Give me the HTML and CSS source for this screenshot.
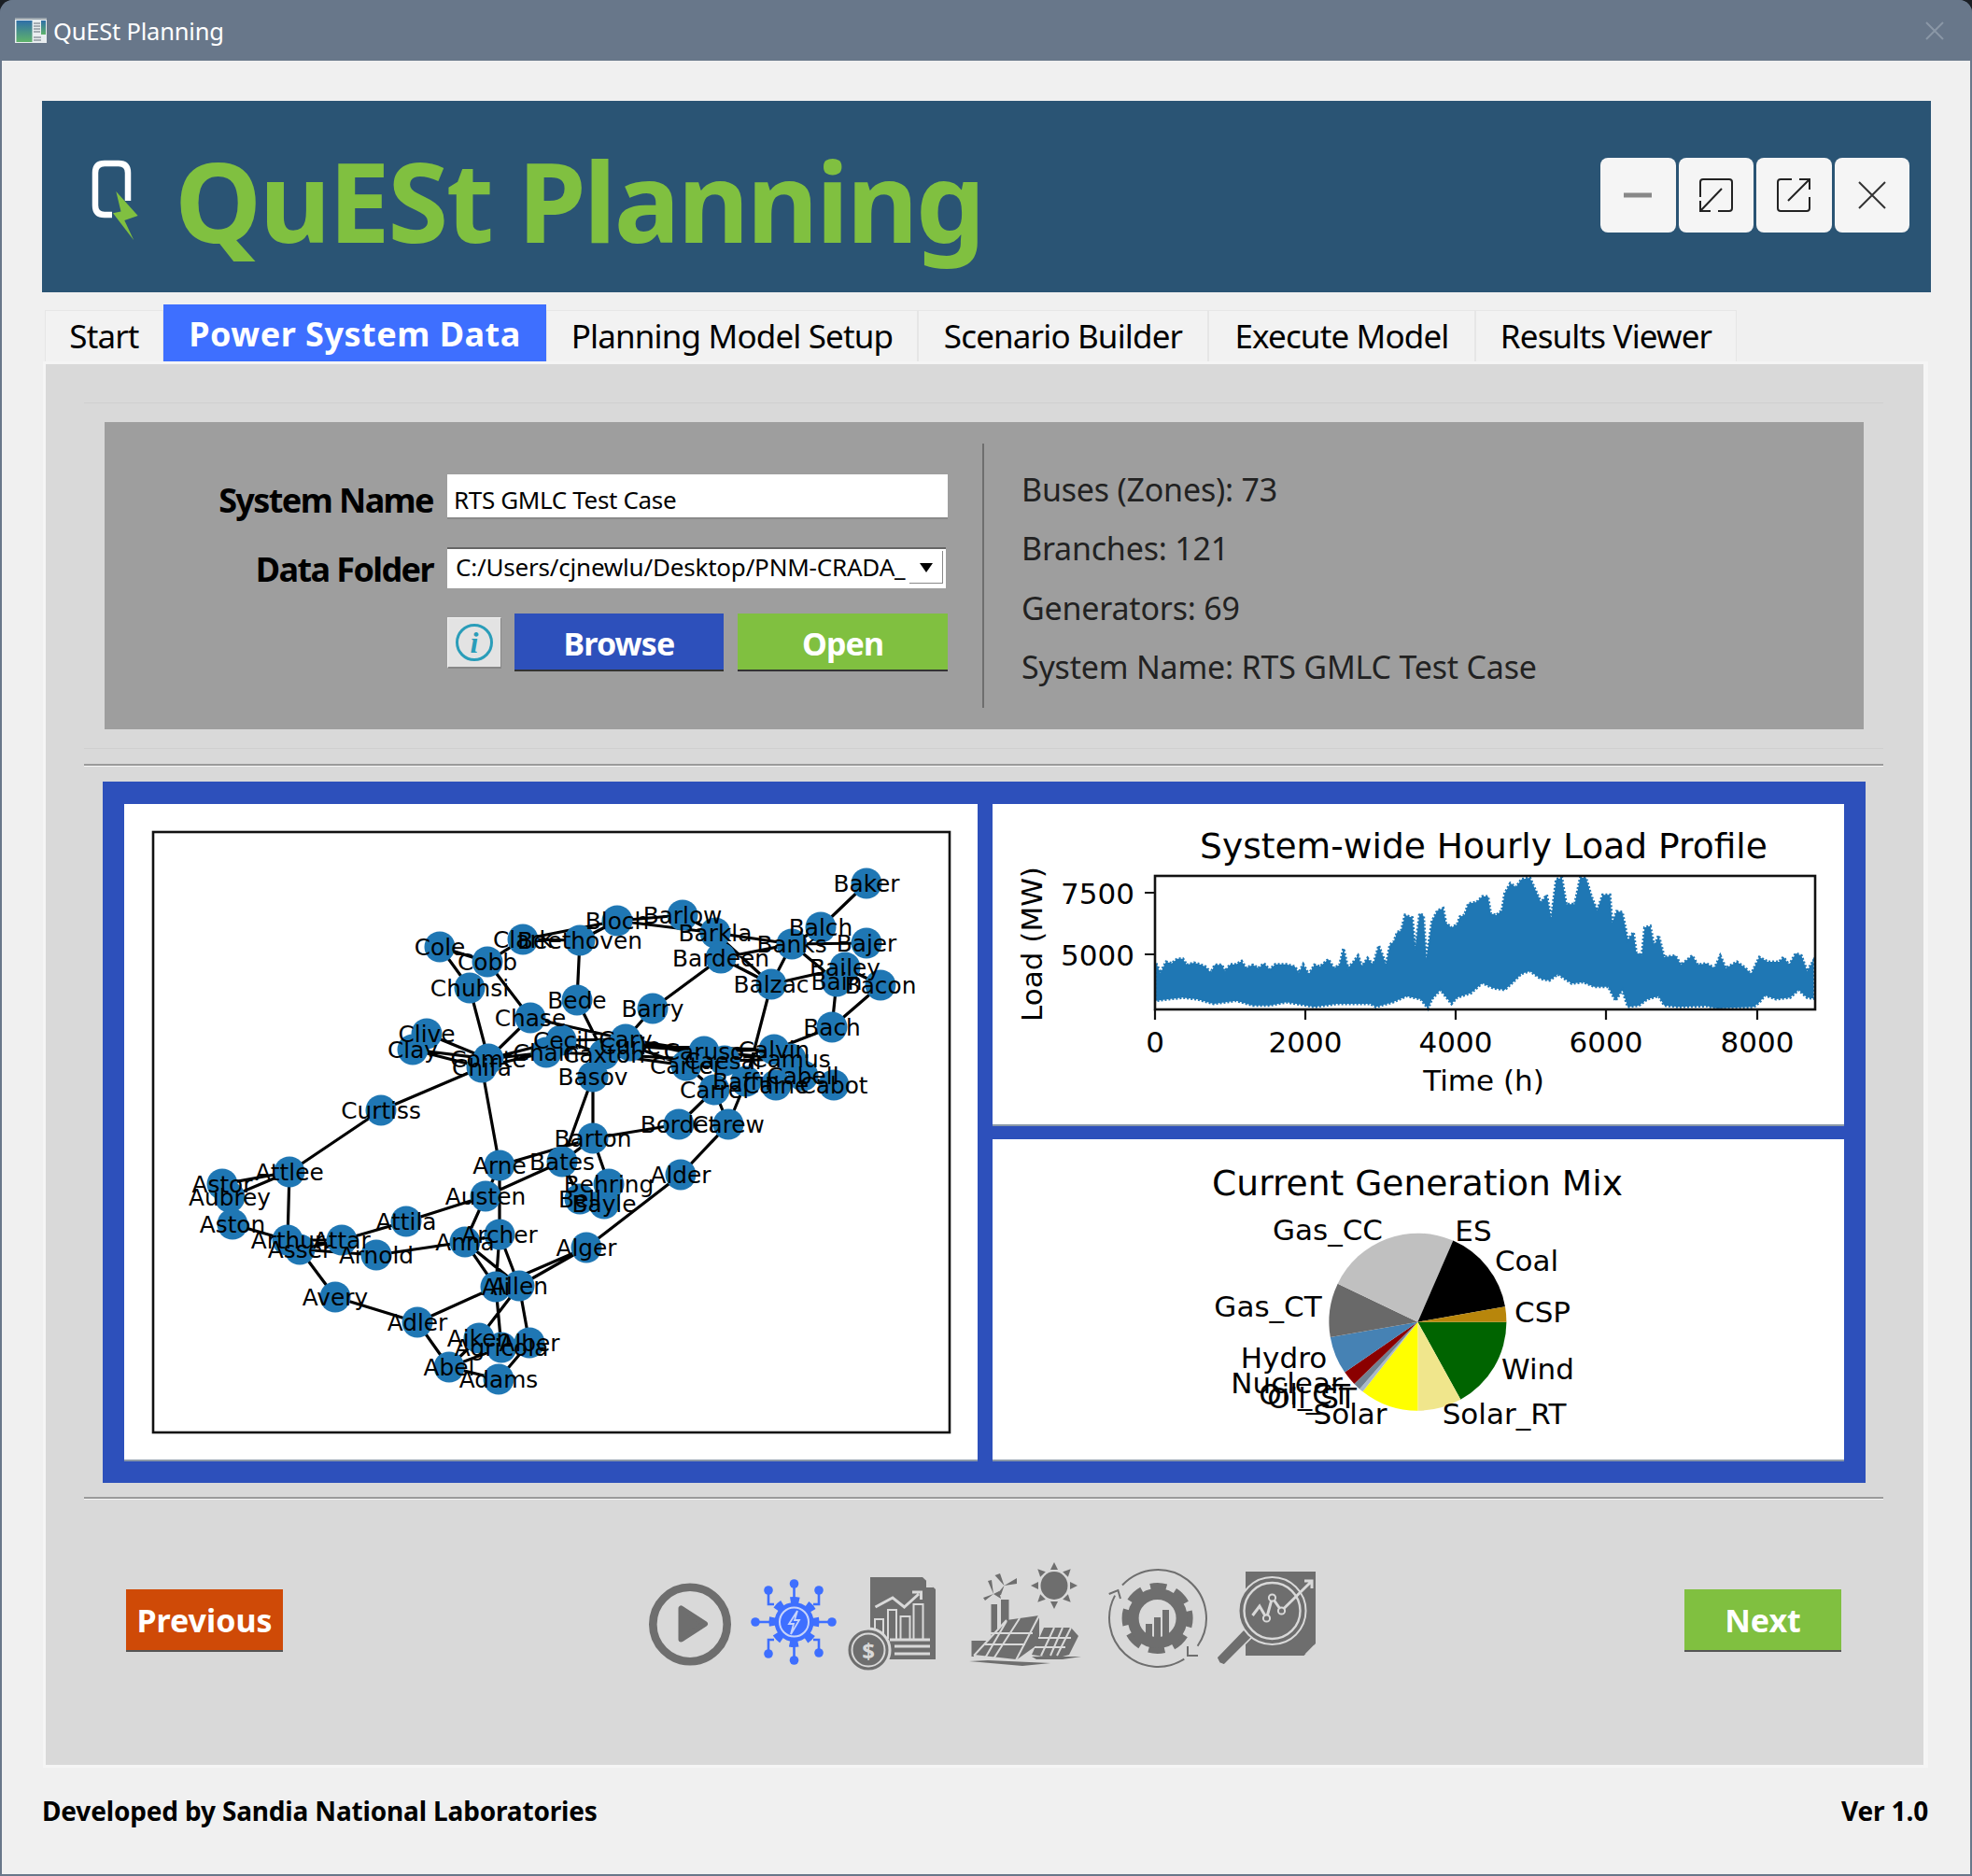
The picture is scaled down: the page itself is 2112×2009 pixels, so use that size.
FILE: index.html
```html
<!DOCTYPE html>
<html lang="en">
<head>
<meta charset="utf-8">
<title>QuESt Planning</title>
<link rel="stylesheet" href="styles.css">
</head>
<body>
<div class="window">
  <div class="titlebar">
    <svg class="app-icon" viewBox="0 0 34 27">
      <defs>
        <linearGradient id="appGrad" x1="0" y1="0" x2="0" y2="1">
          <stop offset="0" stop-color="#2f6fa8"/>
          <stop offset="1" stop-color="#5fb36a"/>
        </linearGradient>
      </defs>
      <rect width="34" height="27" fill="#e9eef0"/>
      <rect y="0" width="34" height="2" fill="#9aa5ad"/>
      <rect x="1.5" y="3" width="17" height="23" fill="url(#appGrad)"/>
      <rect x="28" y="3" width="5" height="15" fill="url(#appGrad)"/>
      <path d="M20 6h7M20 9h7M20 12h7M20 15h7M20 21h8M20 24h8" stroke="#8f989e" stroke-width="1.4"/>
    </svg>
    <span class="title-text">QuESt Planning</span>
    <svg class="title-close" viewBox="0 0 22 22"><path d="M2 2L20 20M20 2L2 20"/></svg>
  </div>

  <div class="content">
    <header class="banner">
      <svg class="logo" viewBox="95 168 54 92">
        <path class="logo-q" d="M137 215V185Q137 175 127 175H112Q102 175 102 185V220Q102 230 112 230H120"/>
        <path class="logo-bolt" d="M124.3 205L147.7 231L133.3 236L143.3 257.3L121 228.3L129.5 226.5Z"/>
      </svg>
      <h1 class="app-name">QuESt Planning</h1>
      <div class="win-buttons">
        <button class="win-btn"><svg viewBox="0 0 36 36"><path class="ic-min" d="M3 18H33"/></svg></button>
        <button class="win-btn"><svg viewBox="0 0 36 36"><path class="ic-win" d="M1 20V4Q1 1 4 1H32Q35 1 35 4V32Q35 35 32 35H20M12 35H1V24M1 35L24 11"/></svg></button>
        <button class="win-btn"><svg viewBox="0 0 36 36"><path class="ic-win" d="M16 1H4Q1 1 1 4V32Q1 35 4 35H32Q35 35 35 32V20M24 1H35V12M35 1L12 24"/></svg></button>
        <button class="win-btn"><svg viewBox="0 0 36 36"><path class="ic-close" d="M4 4L32 32M32 4L4 32"/></svg></button>
      </div>
    </header>

    <nav class="tabs">
      <span class="tab">Start</span>
      <span class="tab tab-active">Power System Data</span>
      <span class="tab">Planning Model Setup</span>
      <span class="tab">Scenario Builder</span>
      <span class="tab">Execute Model</span>
      <span class="tab">Results Viewer</span>
    </nav>

    <main class="panel">
      <section class="form-band">
        <div class="data-box">
          <div class="form">
            <div class="form-row row-name">
              <label class="field-label">System Name</label>
              <div class="text-input">RTS GMLC Test Case</div>
            </div>
            <div class="form-row row-folder">
              <label class="field-label">Data Folder</label>
              <div class="combo">
                <span class="combo-text">C:/Users/cjnewlu/Desktop/PNM-CRADA_</span>
                <span class="combo-arrow"><span class="combo-tri"></span></span>
              </div>
            </div>
            <div class="form-row row-actions">
              <span class="info-btn"><span class="info-ring">i</span></span>
              <button class="action browse">Browse</button>
              <button class="action open">Open</button>
            </div>
          </div>
          <div class="vline"></div>
          <ul class="stats">
            <li>Buses (Zones): 73</li>
            <li>Branches: 121</li>
            <li>Generators: 69</li>
            <li>System Name: RTS GMLC Test Case</li>
          </ul>
        </div>
      </section>
      <hr class="rule">

      <section class="plots">
        <div class="plot plot-network">
          <svg class="chart" viewBox="133 861 914 702">
            <rect class="axes" x="164" y="891" width="853" height="643"/>
            <g transform="translate(0 -1)">
            <path class="edges" d="M928 947L879 994M879 994L848 1012M848 1012L928 1011M848 1012L766 1000M848 1012L772 1027M848 1012L826 1055M848 1012L896 1052M826 1055L905 1037M905 1037L943 1056M896 1052L891 1101M943 1056L891 1101M891 1101L829 1125M766 1000L731 981M731 981L661 987M661 987L766 1000M661 987L621 1008M661 987L560 1007M560 1007L522 1031M560 1007L621 1008M522 1031L471 1015M471 1015L503 1059M522 1031L568 1091M503 1059L523 1135M621 1008L618 1072M618 1072L647 1130M699 1081L772 1027M699 1081L670 1114M772 1027L826 1055M766 1000L826 1055M766 1000L772 1027M826 1055L799 1159M568 1091L670 1114M568 1091L523 1135M457 1108L523 1135M442 1125L523 1135M442 1125L516 1144M523 1135L601 1115M516 1144L585 1128M523 1135L585 1128M601 1115L670 1114M601 1115L647 1130M585 1128L647 1130M670 1114L754 1127M670 1114L776 1137M675 1121L754 1127M675 1121L735 1142M675 1121L829 1125M647 1130L735 1142M647 1130L776 1137M754 1127L829 1125M754 1127L847 1135M776 1137L799 1159M776 1137L847 1135M735 1142L765 1168M847 1135L860 1153M829 1125L860 1153M860 1153L893 1163M831 1163L860 1153M799 1159L831 1163M765 1168L727 1205M765 1168L780 1205M799 1159L780 1205M780 1205L729 1259M727 1205L635 1220M647 1130L635 1154M635 1154L635 1220M635 1154L602 1245M635 1220L535 1249M635 1220L602 1245M635 1220L652 1269M602 1245L520 1282M602 1245L621 1285M652 1269L647 1290M516 1144L408 1190M516 1144L535 1249M408 1190L310 1256M310 1256L238 1269M310 1256L246 1283M238 1269L246 1283M310 1256L308 1329M246 1283L249 1312M249 1312L308 1329M308 1329L321 1339M308 1329L366 1329M321 1339L366 1329M321 1339L403 1345M366 1329L435 1309M435 1309L520 1282M403 1345L498 1331M535 1249L520 1282M520 1282L498 1331M535 1249L535 1323M498 1331L535 1323M498 1331L531 1379M498 1331L556 1378M535 1323L531 1379M535 1323L556 1378M628 1337L531 1379M628 1337L556 1378M628 1337L729 1259M321 1339L359 1390M359 1390L447 1417M447 1417L531 1379M447 1417L481 1465M556 1378L513 1434M531 1379L537 1444M556 1378L567 1439M513 1434L481 1465M537 1444L481 1465M481 1465L534 1478M567 1439L534 1478"/>
            <g class="nodes">
              <circle cx="928" cy="947" r="16.5"/><circle cx="879" cy="994" r="16.5"/><circle cx="928" cy="1011" r="16.5"/><circle cx="848" cy="1012" r="16.5"/><circle cx="905" cy="1037" r="16.5"/><circle cx="943" cy="1056" r="16.5"/><circle cx="896" cy="1052" r="16.5"/><circle cx="891" cy="1101" r="16.5"/><circle cx="731" cy="981" r="16.5"/><circle cx="661" cy="987" r="16.5"/><circle cx="766" cy="1000" r="16.5"/><circle cx="772" cy="1027" r="16.5"/><circle cx="826" cy="1055" r="16.5"/><circle cx="621" cy="1008" r="16.5"/><circle cx="560" cy="1007" r="16.5"/><circle cx="471" cy="1015" r="16.5"/><circle cx="522" cy="1031" r="16.5"/><circle cx="503" cy="1059" r="16.5"/><circle cx="618" cy="1072" r="16.5"/><circle cx="699" cy="1081" r="16.5"/><circle cx="568" cy="1091" r="16.5"/><circle cx="457" cy="1108" r="16.5"/><circle cx="442" cy="1125" r="16.5"/><circle cx="523" cy="1135" r="16.5"/><circle cx="516" cy="1144" r="16.5"/><circle cx="585" cy="1128" r="16.5"/><circle cx="601" cy="1115" r="16.5"/><circle cx="670" cy="1114" r="16.5"/><circle cx="675" cy="1121" r="16.5"/><circle cx="647" cy="1130" r="16.5"/><circle cx="635" cy="1154" r="16.5"/><circle cx="754" cy="1127" r="16.5"/><circle cx="776" cy="1137" r="16.5"/><circle cx="735" cy="1142" r="16.5"/><circle cx="829" cy="1125" r="16.5"/><circle cx="847" cy="1135" r="16.5"/><circle cx="860" cy="1153" r="16.5"/><circle cx="893" cy="1163" r="16.5"/><circle cx="831" cy="1163" r="16.5"/><circle cx="799" cy="1159" r="16.5"/><circle cx="765" cy="1168" r="16.5"/><circle cx="727" cy="1205" r="16.5"/><circle cx="780" cy="1205" r="16.5"/><circle cx="408" cy="1190" r="16.5"/><circle cx="635" cy="1220" r="16.5"/><circle cx="535" cy="1249" r="16.5"/><circle cx="602" cy="1245" r="16.5"/><circle cx="729" cy="1259" r="16.5"/><circle cx="310" cy="1256" r="16.5"/><circle cx="238" cy="1269" r="16.5"/><circle cx="246" cy="1283" r="16.5"/><circle cx="249" cy="1312" r="16.5"/><circle cx="308" cy="1329" r="16.5"/><circle cx="321" cy="1339" r="16.5"/><circle cx="366" cy="1329" r="16.5"/><circle cx="403" cy="1345" r="16.5"/><circle cx="435" cy="1309" r="16.5"/><circle cx="520" cy="1282" r="16.5"/><circle cx="498" cy="1331" r="16.5"/><circle cx="535" cy="1323" r="16.5"/><circle cx="628" cy="1337" r="16.5"/><circle cx="531" cy="1379" r="16.5"/><circle cx="556" cy="1378" r="16.5"/><circle cx="359" cy="1390" r="16.5"/><circle cx="447" cy="1417" r="16.5"/><circle cx="513" cy="1434" r="16.5"/><circle cx="537" cy="1444" r="16.5"/><circle cx="567" cy="1439" r="16.5"/><circle cx="481" cy="1465" r="16.5"/><circle cx="534" cy="1478" r="16.5"/><circle cx="652" cy="1269" r="16.5"/><circle cx="621" cy="1285" r="16.5"/><circle cx="647" cy="1290" r="16.5"/>
            </g>
            <g class="labels">
              <text x="928" y="947">Baker</text><text x="879" y="994">Balch</text><text x="928" y="1011">Bajer</text><text x="848" y="1012">Banks</text><text x="905" y="1037">Bailey</text><text x="943" y="1056">Bacon</text><text x="896" y="1052">Bain</text><text x="891" y="1101">Bach</text><text x="731" y="981">Barlow</text><text x="661" y="987">Bloch</text><text x="766" y="1000">Barkla</text><text x="772" y="1027">Bardeen</text><text x="826" y="1055">Balzac</text><text x="621" y="1008">Beethoven</text><text x="560" y="1007">Clark</text><text x="471" y="1015">Cole</text><text x="522" y="1031">Cobb</text><text x="503" y="1059">Chuhsi</text><text x="618" y="1072">Bede</text><text x="699" y="1081">Barry</text><text x="568" y="1091">Chase</text><text x="457" y="1108">Clive</text><text x="442" y="1125">Clay</text><text x="523" y="1135">Comte</text><text x="516" y="1144">Chifa</text><text x="585" y="1128">Chain</text><text x="601" y="1115">Cecil</text><text x="670" y="1114">Cary</text><text x="675" y="1121">Curie</text><text x="647" y="1130">Caxton</text><text x="635" y="1154">Basov</text><text x="754" y="1127">Caruso</text><text x="776" y="1137">Caesar</text><text x="735" y="1142">Carter</text><text x="829" y="1125">Calvin</text><text x="847" y="1135">Camus</text><text x="860" y="1153">Cabell</text><text x="893" y="1163">Cabot</text><text x="831" y="1163">Caine</text><text x="799" y="1159">Baffin</text><text x="765" y="1168">Carrel</text><text x="727" y="1205">Bordet</text><text x="780" y="1205">Carew</text><text x="408" y="1190">Curtiss</text><text x="635" y="1220">Barton</text><text x="535" y="1249">Arne</text><text x="602" y="1245">Bates</text><text x="729" y="1259">Alder</text><text x="310" y="1256">Attlee</text><text x="238" y="1269">Astor</text><text x="246" y="1283">Aubrey</text><text x="249" y="1312">Aston</text><text x="308" y="1329">Arthur</text><text x="321" y="1339">Asser</text><text x="366" y="1329">Attar</text><text x="403" y="1345">Arnold</text><text x="435" y="1309">Attila</text><text x="520" y="1282">Austen</text><text x="498" y="1331">Anna</text><text x="535" y="1323">Archer</text><text x="628" y="1337">Alger</text><text x="531" y="1379">Ali</text><text x="556" y="1378">Allen</text><text x="359" y="1390">Avery</text><text x="447" y="1417">Adler</text><text x="513" y="1434">Aiken</text><text x="537" y="1444">Agricola</text><text x="567" y="1439">Alber</text><text x="481" y="1465">Abel</text><text x="534" y="1478">Adams</text><text x="652" y="1269">Behring</text><text x="621" y="1285">Bell</text><text x="647" y="1290">Bayle</text>
            </g>
            </g>
          </svg>
        </div>
        <div class="plot plot-load">
          <svg class="chart" viewBox="1063 861 912 343">
            <g transform="translate(1060 860) scale(0.5995 0.3333)">
              <path class="load-band" d="M297 515L305 545L315 510L325 515L335 500L345 500L352 520L365 513L375 518L385 525L395 545L402 520L415 520L420 540L430 518L440 518L450 508L458 530L470 520L480 530L490 515L500 535L510 518L530 518L545 525L552 545L560 518L570 550L580 520L590 525L605 502L615 530L625 520L632 467L640 530L650 510L658 490L665 525L675 498L685 520L695 458L703 495L708 520L715 455L722 445L728 415L735 410L742 360L755 368L760 470L768 355L775 362L780 500L790 380L800 345L810 338L815 385L825 400L835 390L840 365L848 360L855 323L870 318L880 300L890 300L895 355L905 360L915 345L920 290L930 258L940 270L950 245L965 240L975 280L985 320L995 295L1003 370L1012 245L1022 240L1030 325L1045 325L1055 240L1065 240L1075 300L1085 345L1095 295L1108 295L1112 385L1120 348L1130 350L1140 440L1150 415L1155 480L1165 490L1170 400L1180 395L1187 460L1195 425L1205 495L1225 490L1235 520L1255 490L1265 520L1280 515L1295 530L1305 490L1315 530L1335 510L1350 530L1360 550L1375 495L1390 510L1410 510L1418 495L1428 520L1440 483L1450 490L1460 540L1472 505L1472 628L1460 625L1445 600L1430 625L1405 630L1385 618L1375 640L1365 655L1320 658L1300 660L1280 652L1230 655L1205 650L1195 620L1175 630L1160 650L1140 655L1130 600L1118 635L1105 590L1080 590L1060 575L1040 580L1015 550L1000 570L985 565L965 540L950 548L935 575L920 600L900 595L880 578L860 610L835 625L825 645L805 600L790 630L783 660L770 630L745 620L720 640L690 655L680 645L620 645L580 655L565 650L530 640L500 650L470 650L440 635L400 645L370 630L345 625L320 630L297 635Z"/>
            </g>
            <rect class="axes" x="1237" y="938" width="707" height="143"/>
            <path class="ticks" d="M1237 1081v11M1398 1081v11M1559 1081v11M1720 1081v11M1882 1081v11M1237 956h-11M1237 1022h-11"/>
            <text class="mpl-12" x="1589" y="906">System-wide Hourly Load Profile</text>
            <text class="mpl-10 end" x="1215" y="957">7500</text>
            <text class="mpl-10 end" x="1215" y="1023">5000</text>
            <text class="mpl-10" x="1237" y="1116">0</text>
            <text class="mpl-10" x="1398" y="1116">2000</text>
            <text class="mpl-10" x="1559" y="1116">4000</text>
            <text class="mpl-10" x="1720" y="1116">6000</text>
            <text class="mpl-10" x="1882" y="1116">8000</text>
            <text class="mpl-10" x="1589" y="1157">Time (h)</text>
            <text class="mpl-10" transform="translate(1105 1011) rotate(-90)">Load (MW)</text>
          </svg>
        </div>
        <div class="plot plot-mix">
          <svg class="chart" viewBox="1063 1220 912 343">
            <path class="s-wind" d="M1518.4 1415.7L1613.4 1415.7A95 95 0 0 1 1564.3 1498.8Z"/>
            <path class="s-srt" d="M1518.4 1415.7L1564.3 1498.8A95 95 0 0 1 1518.4 1510.7Z"/>
            <path class="s-solar" d="M1518.4 1415.7L1518.4 1510.7A95 95 0 0 1 1459.5 1490.2Z"/>
            <path class="s-oilst" d="M1518.4 1415.7L1459.5 1490.2A95 95 0 0 1 1456.1 1487.4Z"/>
            <path class="s-oilct" d="M1518.4 1415.7L1456.1 1487.4A95 95 0 0 1 1450.4 1482Z"/>
            <path class="s-nuc" d="M1518.4 1415.7L1450.4 1482A95 95 0 0 1 1440.2 1469.6Z"/>
            <path class="s-hydro" d="M1518.4 1415.7L1440.2 1469.6A95 95 0 0 1 1424.8 1431.9Z"/>
            <path class="s-gasct" d="M1518.4 1415.7L1424.8 1431.9A95 95 0 0 1 1432.7 1374.7Z"/>
            <path class="s-gascc" d="M1518.4 1415.7L1432.7 1374.7A95 95 0 0 1 1556.3 1328.6Z"/>
            <path class="s-coal" d="M1518.4 1415.7L1556.3 1328.6A95 95 0 0 1 1612 1399.2Z"/>
            <path class="s-csp" d="M1518.4 1415.7L1612 1399.2A95 95 0 0 1 1613.4 1415.7Z"/>
            <text class="mpl-12" x="1518" y="1267">Current Generation Mix</text>
            <text class="mpl-10" x="1422" y="1317">Gas_CC</text>
            <text class="mpl-10" x="1578" y="1318">ES</text>
            <text class="mpl-10" x="1635" y="1350">Coal</text>
            <text class="mpl-10" x="1652" y="1405">CSP</text>
            <text class="mpl-10" x="1647" y="1466">Wind</text>
            <text class="mpl-10" x="1611" y="1514">Solar_RT</text>
            <text class="mpl-10" x="1446" y="1514">Solar</text>
            <text class="mpl-10" x="1358" y="1399">Gas_CT</text>
            <text class="mpl-10" x="1375" y="1454">Hydro</text>
            <text class="mpl-10" x="1378" y="1481">Nuclear</text>
            <text class="mpl-10" x="1397" y="1493">Oil_CT</text>
            <text class="mpl-10" x="1405" y="1497">Oil_ST</text>
          </svg>
        </div>
      </section>
      <hr class="rule rule-low">

      <footer class="nav-row">
        <button class="nav-btn prev">Previous</button>
        <div class="step-icons">
          <svg class="step" viewBox="690 1670 110 120">
            <circle class="g-ring" cx="739" cy="1739.5" r="39.7"/>
            <path class="g-tri" d="M729.5 1722.5V1755.5L755 1739Z"/>
          </svg>
          <svg class="step" viewBox="800 1670 100 120">
            <path class="b-wire" d="M850.5 1696V1711M823 1703V1718H829M877 1703V1718H871M809 1737H825M891 1737H876M823 1771V1756H829M877 1770V1756H871M850.5 1778V1763"/>
            <g class="b-dots">
              <circle cx="850.5" cy="1696" r="4.8"/><circle cx="823" cy="1703" r="4.8"/><circle cx="877" cy="1703" r="4.8"/><circle cx="809" cy="1737" r="4.8"/><circle cx="891" cy="1737" r="4.8"/><circle cx="823" cy="1771" r="4.8"/><circle cx="877" cy="1770" r="4.8"/><circle cx="850.5" cy="1778" r="4.8"/>
            </g>
            <circle class="b-gear" cx="850.5" cy="1737" r="21"/>
            <circle class="b-teeth" cx="850.5" cy="1737" r="23.5" transform="rotate(-11.25 850.5 1737)"/>
            <circle class="b-inner" cx="850.5" cy="1737" r="15.5"/>
            <path class="b-bolt" d="M854 1725L845 1739H850L847 1750L856 1735H851Z"/>
          </svg>
          <svg class="step" viewBox="900 1670 120 120">
            <path class="g-fill" d="M932 1689H988L1002 1702V1777H932Z"/>
            <path class="g-cut" d="M992 1691L1000 1700H992Z"/>
            <path class="l-line" d="M937.5 1721L956 1711L968.5 1721L984 1707M977 1705H986.5V1713"/>
            <path class="l-thin" d="M937 1755V1734H946V1755M951 1755V1724H960V1755M964.5 1755V1731H974.5V1755M978.5 1755V1718H988.5V1755"/>
            <path class="l-line" d="M953 1756H996M958 1763H996M958 1771H996"/>
            <circle class="coin" cx="930" cy="1767" r="23"/>
            <circle class="coin-in" cx="930" cy="1767" r="17.5"/>
            <text class="coin-sym" x="930" y="1767">$</text>
          </svg>
          <svg class="step" viewBox="1020 1670 150 120">
            <ellipse class="g-solid" cx="1129" cy="1698" rx="14.5" ry="15"/>
            <g class="g-solid">
              <path d="M1129 1673L1125 1681H1133Z"/><path d="M1129 1673L1125 1681H1133Z" transform="rotate(45 1129 1698)"/><path d="M1129 1673L1125 1681H1133Z" transform="rotate(90 1129 1698)"/><path d="M1129 1673L1125 1681H1133Z" transform="rotate(135 1129 1698)"/><path d="M1129 1673L1125 1681H1133Z" transform="rotate(180 1129 1698)"/><path d="M1129 1673L1125 1681H1133Z" transform="rotate(225 1129 1698)"/><path d="M1129 1673L1125 1681H1133Z" transform="rotate(270 1129 1698)"/><path d="M1129 1673L1125 1681H1133Z" transform="rotate(315 1129 1698)"/>
              <path d="M1061.5 1718H1068V1760H1061.5ZM1072 1713H1080.5V1745H1072ZM1040.5 1757H1063V1774H1040.5Z"/>
              <path d="M1064 1707L1058 1693L1062 1692ZM1064 1707L1053 1711L1055 1714ZM1064 1707L1072 1712L1070 1704Z"/>
              <path d="M1075.5 1698L1065.5 1687L1071 1685ZM1075.5 1698L1089 1696L1089 1690ZM1075.5 1698L1067 1708L1072 1708Z"/>
              <path d="M1078 1735L1113 1730V1760L1088 1778L1043 1773Z"/>
              <path d="M1118 1743H1147L1155 1752L1145 1772L1131 1776L1105 1772Z"/>
              <path d="M1038 1779L1095 1784L1125 1781L1058 1778ZM1105 1774H1158L1138 1777L1110 1777Z"/>
            </g>
            <path class="l-thin" d="M1113 1730L1088 1778M1061 1749H1106M1055 1761H1098M1092 1733L1065 1775M1078 1736L1056 1774M1078 1735L1043 1773M1043 1773L1088 1778"/>
            <path class="l-thin" d="M1112 1754H1147M1108 1764H1141M1129 1743L1115 1773M1138 1743L1125 1773M1147 1743L1132 1773"/>
          </svg>
          <svg class="step" viewBox="1170 1670 128 120">
            <circle class="c-teeth" cx="1239.6" cy="1733" r="34" transform="rotate(-13 1239.6 1733)"/>
            <circle class="c-body" cx="1239.6" cy="1733" r="26"/>
            <path class="g-fill" d="M1227 1739H1234V1753H1227ZM1236 1732H1243V1753H1236ZM1245 1724H1252V1753H1245Z"/>
            <path class="c-arc" d="M1202 1697.5A52 52 0 0 1 1282.6 1762.8M1268.3 1776.6A52 52 0 0 1 1194.1 1708.6M1187.7 1707L1197.4 1703L1200 1712M1272 1763V1773H1283"/>
          </svg>
          <svg class="step" viewBox="1298 1670 114 120">
            <path class="g-fill" d="M1334 1683H1409V1760L1396.5 1773H1334Z"/>
            <path class="g-cut" d="M1407 1762V1771H1398Z"/>
            <path class="r-handle" d="M1332 1745L1303 1775L1306 1781L1311 1783L1342 1752Z"/>
            <circle class="r-ring" cx="1362.5" cy="1725" r="36"/>
            <circle class="r-ring-in" cx="1362.5" cy="1725" r="30"/>
            <path class="l-line" d="M1341.5 1730L1349 1720L1356.5 1733L1362.5 1711L1372.5 1725L1404 1694M1397 1693H1405V1701"/>
            <g class="r-dots"><circle cx="1356.5" cy="1733" r="3.6"/><circle cx="1362.5" cy="1711" r="3.6"/><circle cx="1372.5" cy="1725" r="3.6"/></g>
          </svg>
        </div>
        <button class="nav-btn next">Next</button>
      </footer>
    </main>

    <div class="statusline">
      <span>Developed by Sandia National Laboratories</span>
      <span>Ver 1.0</span>
    </div>
  </div>
</div>
</body>
</html>
```

FILE: styles.css
```css
* { box-sizing: border-box; }
html, body { margin: 0; height: 2009px; overflow: hidden; background: #1b1f24; }
body { font-family: "Noto Sans", "Open Sans", sans-serif; color: #000; }

.window {
  width: 2112px; height: 2009px;
  display: flex; flex-direction: column;
  border-radius: 14px 14px 0 0;
  overflow: hidden;
  background: #68778a;
  padding: 0 2px 2px;
}

.titlebar {
  height: 65px; flex: none;
  margin: 0 -2px;
  display: flex; align-items: center;
  padding: 0 29px 0 16px;
  background: #68778a;
}
.app-icon { width: 34px; height: 27px; flex: none; margin-top: -1px; }
.title-text { margin-left: 7px; font-size: 25.5px; color: #fff; letter-spacing: -0.2px; }
.title-close { width: 22px; height: 22px; margin-left: auto; }
.title-close path { stroke: #8a97a6; stroke-width: 2; fill: none; }

.content {
  flex: 1; min-height: 0;
  background: #f0f0f0;
  padding: 43px 42px 0 43px;
  display: flex; flex-direction: column;
}

.banner {
  height: 205px; flex: none;
  background: #2a5474;
  display: flex; align-items: flex-start;
  padding-right: 23px;
}
.logo { width: 54px; height: 92px; margin: 60px 0 0 50px; flex: none; }
.logo-q { fill: none; stroke: #fff; stroke-width: 6.5; }
.logo-bolt { fill: #80c040; }
.app-name {
  margin: 4px 0 0 38px;
  font-size: 118px; line-height: 205px; font-weight: 700;
  letter-spacing: -2.6px;
  color: #80c040; white-space: nowrap;
}
.win-buttons { margin-left: auto; margin-top: 61px; display: flex; gap: 3.3px; }
.win-btn {
  width: 80.2px; height: 80px; padding: 0; border: 0;
  border-radius: 8px; background: #f5f5f5;
  display: flex; align-items: center; justify-content: center;
}
.win-btn svg { width: 36px; height: 36px; overflow: visible; }
.ic-min { stroke: #888; stroke-width: 5; fill: none; }
.ic-win { stroke: #222; stroke-width: 2; fill: none; }
.ic-close { stroke: #333; stroke-width: 2; fill: none; }

.tabs {
  margin: 13px 0 0 3px; height: 61px; flex: none;
  display: grid; align-items: end;
  grid-template-columns: 127px 410px 398px 311px 286px 280px;
  width: 1812px;
}
.tab {
  height: 55px;
  display: flex; align-items: center; justify-content: center;
  font-size: 35px; letter-spacing: -0.85px; white-space: nowrap;
  background: #f2f2f2; padding-bottom: 2px;
  border: 1px solid #e6e6e6; border-bottom: 0;
}
.tab-active {
  height: 61px; background: #3e6fff; color: #fff; font-weight: 700; border: 0;
  font-size: 36px; letter-spacing: 0.5px; padding: 2px 0 0;
}

.panel {
  margin-left: 1px; width: 2019px; height: 1506px; flex: none;
  background: #d9d9d9;
  border: 3px solid #f5f5f5; border-right-width: 5px;
  display: flex; flex-direction: column;
}

.form-band {
  margin: 41px 43px 0 41px;
  padding: 20px 0;
  border-top: 1px solid #cfcfcf; border-bottom: 1px solid #cfcfcf;
  flex: none;
}
.data-box {
  margin-left: 22px; width: 1884px; height: 329px;
  background: #9e9e9e;
  display: flex; align-items: flex-start;
}
.form { width: 903px; margin-top: 56px; flex: none; }
.form-row { display: flex; justify-content: flex-end; align-items: center; }
.row-name { height: 48px; }
.row-folder { height: 44px; margin-top: 30px; }
.row-actions { height: 62px; margin-top: 27px; }
.field-label { font-size: 36px; font-weight: 700; margin-right: 15px; white-space: nowrap; letter-spacing: -1.6px; }
.row-name .field-label { padding-top: 6px; }
.row-folder .field-label { padding-top: 3px; }
.text-input {
  width: 536px; height: 48px;
  background: #fff; border-bottom: 2px solid #8a8a8a;
  font-size: 26px; letter-spacing: -0.35px; padding: 9px 0 0 7px; white-space: nowrap;
}
.combo {
  width: 534px; height: 44px; margin-right: 2px;
  background: #fff; border-top: 2px solid #666;
  position: relative;
  display: flex; align-items: center;
  font-size: 26px; letter-spacing: -0.2px; padding: 0 0 4px 9px; overflow: hidden;
}
.combo-text { white-space: nowrap; }
.combo-arrow {
  position: absolute; right: 3px; top: 2px; width: 36px; height: 35px;
  background: #fff;
  border-right: 1px solid #888; border-bottom: 1px solid #888;
  display: flex; justify-content: center; padding-top: 13px;
}
.combo-tri { width: 0; height: 0; border: 7px solid transparent; border-top: 10px solid #000; border-bottom: 0; }
.info-btn {
  width: 58px; height: 55px; margin-right: 14px; margin-top: 1px;
  background: #e3e3e3; border: 1px solid #f0f0f0; border-bottom: 2px solid #888; border-right-color: #888;
  display: flex; align-items: center; justify-content: center;
}
.info-ring {
  width: 40px; height: 40px; border-radius: 50%;
  border: 3px solid #2a9db9;
  color: #2a9db9;
  font: italic 700 32px/34px "Liberation Serif", serif;
  text-align: center;
}
.action {
  width: 225px; height: 62px; padding: 4px 0 0; border: 0;
  border-bottom: 2px solid #333;
  font: 700 34px "Noto Sans", sans-serif; letter-spacing: -0.9px; color: #fff;
}
.browse { background: #2d50bb; margin-right: 15px; width: 224px; }
.open { background: #80c040; }

.vline { width: 2px; height: 283px; margin: 23px 0 0 37px; background: #6e6e6e; flex: none; }
.stats { list-style: none; margin: 41px 0 0 40px; padding: 0; font-size: 34px; letter-spacing: -0.2px; color: #222; }
.stats li { height: 63.3px; line-height: 63.3px; white-space: nowrap; margin-top: 0; }

.rule {
  margin: 16px 43px 0 41px; height: 3px; flex: none;
  border: 0; border-top: 2px solid #9a9a9a; border-bottom: 1px solid #f5f5f5;
}
.rule-low { margin-top: 15px; }

.plots {
  margin: 16px 0 0 61px; width: 1888px; height: 751px; flex: none;
  background: #2d50bb;
  padding: 24px 23px 23px;
  display: grid;
  grid-template-columns: 914px 912px;
  grid-template-rows: 345px 345px;
  column-gap: 16px; row-gap: 14px;
}
.plot { background: #fff; border-bottom: 2px solid #8a98a8; }
.plot-network { grid-row: 1 / 3; }
.chart { display: block; width: 100%; height: 100%; }

.axes { fill: none; stroke: #111; stroke-width: 2.6; }
.edges { fill: none; stroke: #000; stroke-width: 3.2; }
.nodes { fill: #1f77b4; }
.labels text {
  font: 24.8px "DejaVu Sans", sans-serif;
  text-anchor: middle; dominant-baseline: central;
}
.load-band {
  fill: #1f77b4;
  stroke: #1f77b4; stroke-width: 3; stroke-dasharray: 2 2;
  vector-effect: non-scaling-stroke;
}
.ticks { stroke: #111; stroke-width: 2.2; fill: none; }
.mpl-10, .mpl-12 {
  font-family: "DejaVu Sans", sans-serif;
  text-anchor: middle; dominant-baseline: central;
}
.mpl-10 { font-size: 31px; }
.mpl-12 { font-size: 37.6px; }
.mpl-10.end { text-anchor: end; }

.s-wind { fill: #006400; }
.s-srt { fill: #f0e68c; }
.s-solar { fill: #ffff00; }
.s-oilst { fill: #a9b8c8; }
.s-oilct { fill: #708090; }
.s-nuc { fill: #8b0000; }
.s-hydro { fill: #4682b4; }
.s-gasct { fill: #696969; }
.s-gascc { fill: #c0c0c0; }
.s-coal { fill: #000; }
.s-csp { fill: #b8860b; }

.nav-row { display: flex; align-items: flex-start; margin: 64px 0 0 86px; width: 1837px; flex: none; }
.nav-btn {
  width: 168px; height: 67px; padding: 0; margin-top: 32px;
  border: 0; border-bottom: 2px solid #555;
  font: 700 34px "Noto Sans", sans-serif; color: #fff; flex: none;
}
.prev { background: #cf4a07; }
.next { background: #80c040; margin-left: auto; }
.step-icons { display: flex; margin-left: 387px; flex: none; }
.step { height: 120px; width: auto; display: block; }
.step:nth-child(1) { width: 110px; }
.step:nth-child(2) { width: 100px; }
.step:nth-child(3) { width: 120px; }
.step:nth-child(4) { width: 150px; }
.step:nth-child(5) { width: 128px; }
.step:nth-child(6) { width: 114px; }

.g-ring { fill: none; stroke: #6e6e6e; stroke-width: 8.6; }
.g-tri { fill: #6e6e6e; stroke: #6e6e6e; stroke-width: 6; stroke-linejoin: round; }
.g-fill, .g-solid { fill: #6e6e6e; }
.g-cut { fill: #d9d9d9; }
.l-line { fill: none; stroke: #d9d9d9; stroke-width: 3; }
.l-thin { fill: none; stroke: #d9d9d9; stroke-width: 2; }
.b-wire { fill: none; stroke: #3e6fff; stroke-width: 2.6; }
.b-dots, .b-gear { fill: #3e6fff; }
.b-teeth { fill: none; stroke: #3e6fff; stroke-width: 7; stroke-dasharray: 9.23 9.23; }
.b-inner { fill: #3e6fff; stroke: #c7d4fa; stroke-width: 2; }
.b-bolt { fill: none; stroke: #c7d4fa; stroke-width: 1.8; stroke-linejoin: miter; }
.coin { fill: #6e6e6e; stroke: #d9d9d9; stroke-width: 3; }
.coin-in { fill: none; stroke: #d9d9d9; stroke-width: 2; }
.coin-sym {
  font: 700 24px "Noto Sans", sans-serif; fill: #d9d9d9;
  text-anchor: middle; dominant-baseline: central;
}
.c-body { fill: none; stroke: #6e6e6e; stroke-width: 12; }
.c-teeth { fill: none; stroke: #6e6e6e; stroke-width: 8; stroke-dasharray: 17 9.7; }
.c-arc { fill: none; stroke: #6e6e6e; stroke-width: 2; }
.r-handle { fill: #6e6e6e; stroke: #d9d9d9; stroke-width: 1.5; }
.r-ring { fill: #6e6e6e; stroke: #d9d9d9; stroke-width: 2; }
.r-ring-in { fill: none; stroke: #d9d9d9; stroke-width: 2.4; }
.r-dots circle { fill: #6e6e6e; stroke: #d9d9d9; stroke-width: 2; }

.statusline {
  display: flex; justify-content: space-between; align-items: center;
  height: 92px; padding: 0 3px 0 0; flex: none;
  font-size: 28px; font-weight: 700; letter-spacing: -0.16px;
}
```
